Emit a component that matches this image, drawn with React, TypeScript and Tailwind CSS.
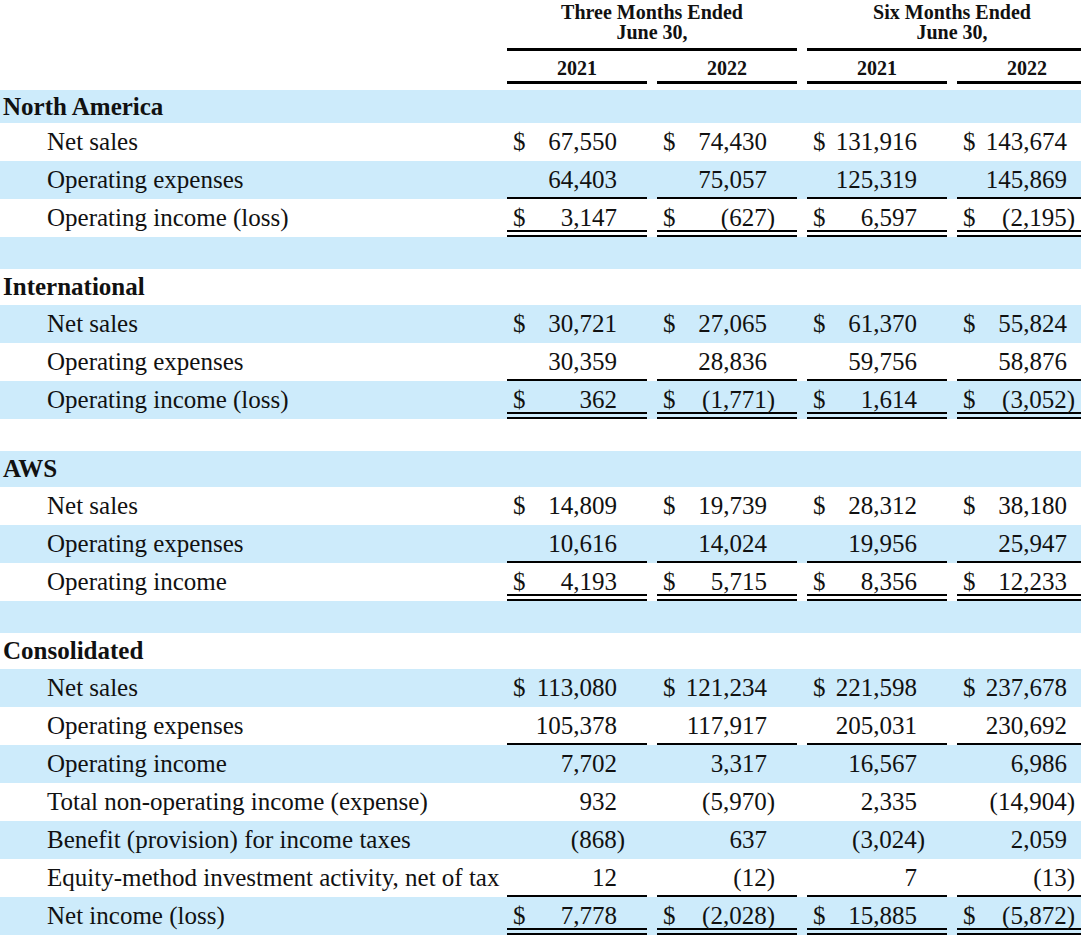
import * as React from "react";

type Row =
  | { kind: "section"; label: string; h: string }
  | { kind: "blank" }
  | {
      kind: "data";
      label: string;
      values: string[];
      dollar?: boolean;
      line?: "single" | "double";
    };

const rows: Row[] = [
  { kind: "section", label: "North America", h: "h-[33px]" },
  { kind: "data", label: "Net sales", values: ["67,550", "74,430", "131,916", "143,674"], dollar: true },
  { kind: "data", label: "Operating expenses", values: ["64,403", "75,057", "125,319", "145,869"], line: "single" },
  { kind: "data", label: "Operating income (loss)", values: ["3,147", "(627)", "6,597", "(2,195)"], dollar: true, line: "double" },
  { kind: "blank" },
  { kind: "section", label: "International", h: "h-[36px]" },
  { kind: "data", label: "Net sales", values: ["30,721", "27,065", "61,370", "55,824"], dollar: true },
  { kind: "data", label: "Operating expenses", values: ["30,359", "28,836", "59,756", "58,876"], line: "single" },
  { kind: "data", label: "Operating income (loss)", values: ["362", "(1,771)", "1,614", "(3,052)"], dollar: true, line: "double" },
  { kind: "blank" },
  { kind: "section", label: "AWS", h: "h-[36px]" },
  { kind: "data", label: "Net sales", values: ["14,809", "19,739", "28,312", "38,180"], dollar: true },
  { kind: "data", label: "Operating expenses", values: ["10,616", "14,024", "19,956", "25,947"], line: "single" },
  { kind: "data", label: "Operating income", values: ["4,193", "5,715", "8,356", "12,233"], dollar: true, line: "double" },
  { kind: "blank" },
  { kind: "section", label: "Consolidated", h: "h-[36px]" },
  { kind: "data", label: "Net sales", values: ["113,080", "121,234", "221,598", "237,678"], dollar: true },
  { kind: "data", label: "Operating expenses", values: ["105,378", "117,917", "205,031", "230,692"], line: "single" },
  { kind: "data", label: "Operating income", values: ["7,702", "3,317", "16,567", "6,986"] },
  { kind: "data", label: "Total non-operating income (expense)", values: ["932", "(5,970)", "2,335", "(14,904)"] },
  { kind: "data", label: "Benefit (provision) for income taxes", values: ["(868)", "637", "(3,024)", "2,059"] },
  { kind: "data", label: "Equity-method investment activity, net of tax", values: ["12", "(12)", "7", "(13)"], line: "single" },
  { kind: "data", label: "Net income (loss)", values: ["7,778", "(2,028)", "15,885", "(5,872)"], dollar: true, line: "double" },
];

const Amount = ({ value }: { value: string }) => {
  if (value.startsWith("(")) {
    return (
      <span>
        {value.slice(0, -1)}
        <span className="-mr-[8px]">{")"}</span>
      </span>
    );
  }
  return <span>{value}</span>;
};

const ValueCell = ({
  value,
  dollar,
  line,
  first,
}: {
  value: string;
  dollar?: boolean;
  line?: "single" | "double";
  first: boolean;
}) => {
  // padding-top mirrors the bottom rule so the figures stay centred in the row
  const border =
    line === "single"
      ? "border-b-[2px] border-black pt-[2px]"
      : line === "double"
        ? "border-b-[7px] border-double border-black pt-[7px]"
        : "";
  return (
    <div
      className={`w-[140px] shrink-0 h-full flex items-center justify-between pl-[6px] pr-[30px] ${first ? "" : "ml-[10px]"} ${border}`}
    >
      <span>{dollar ? "$" : ""}</span>
      <Amount value={value} />
    </div>
  );
};

const App = () => {
  return (
    <div className="w-[1081px] h-[940px] overflow-hidden bg-white text-[#111] font-['Liberation_Serif',serif]">
      <div className="w-[1097px]">
        {/* column headings */}
        <div className="h-[90px] flex font-bold text-[20px] leading-[20px]">
          <div className="w-[507px] shrink-0" />
          {["Three Months Ended", "Six Months Ended"].map((title, gi) => (
            <div key={title} className={`w-[290px] shrink-0 flex flex-col ${gi ? "ml-[10px]" : ""}`}>
              <div className="h-[51px] flex flex-col items-center justify-start pt-[2px] border-b-[3px] border-black">
                <span>{title}</span>
                <span>{"June 30,"}</span>
              </div>
              <div className="flex mt-[5px]">
                <div className="w-[140px] h-[28px] pt-[2px] text-center border-b-[3px] border-black">{"2021"}</div>
                <div className="w-[140px] h-[28px] pt-[2px] ml-[10px] text-center border-b-[3px] border-black">{"2022"}</div>
              </div>
            </div>
          ))}
        </div>

        {rows.map((row, i) => {
          const bg = i % 2 === 0 ? "bg-[#cdebfb]" : "bg-white";
          if (row.kind === "blank") {
            return <div key={i} className={`h-[32px] ${bg}`} />;
          }
          if (row.kind === "section") {
            return (
              <div key={i} className={`${row.h} ${bg} flex items-center pl-[3px] font-bold text-[25px]`}>
                {row.label}
              </div>
            );
          }
          return (
            <div key={i} className={`h-[38px] ${bg} flex items-center text-[25px]`}>
              <div className="w-[507px] shrink-0 pl-[47px] whitespace-nowrap">{row.label}</div>
              {row.values.map((v, j) => (
                <ValueCell key={j} value={v} dollar={row.dollar} line={row.line} first={j === 0} />
              ))}
            </div>
          );
        })}
      </div>
    </div>
  );
};

export default App;
